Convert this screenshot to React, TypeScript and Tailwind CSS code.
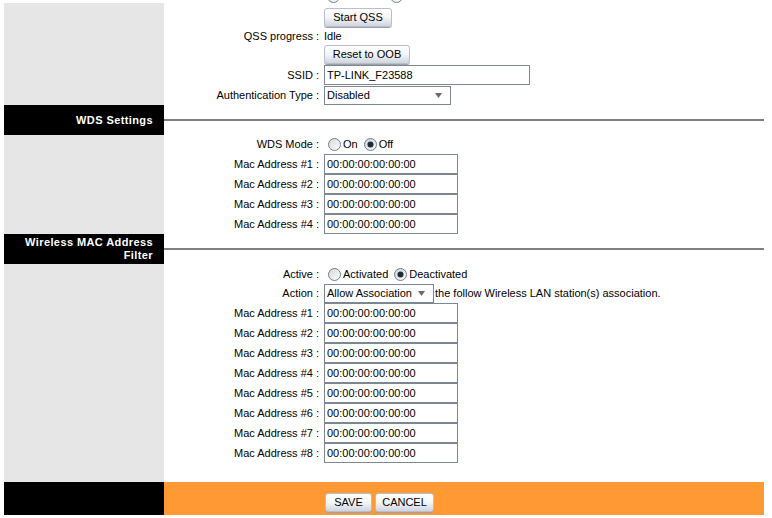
import type { ReactNode } from "react";

const FONT = "font-['Liberation_Sans',Arial,sans-serif]";

function Radio({ checked }: { checked?: boolean }) {
  return (
    <svg width="13" height="13" viewBox="0 0 13 13" className="shrink-0">
      <defs>
        <linearGradient id={checked ? "rg1" : "rg0"} x1="0" y1="0" x2="1" y2="1">
          <stop offset="0" stopColor={checked ? "#c9ced6" : "#d6d6d6"} />
          <stop offset="1" stopColor="#ffffff" />
        </linearGradient>
      </defs>
      <circle cx="6.5" cy="6.5" r="6" fill={`url(#${checked ? "rg1" : "rg0"})`} stroke="#6f7f8f" strokeWidth="1" />
      {checked && <circle cx="6.5" cy="6.5" r="3" fill="#1f2a36" />}
    </svg>
  );
}

function Btn({ children, w }: { children: ReactNode; w: string }) {
  return (
    <div
      className={`${w} h-[19px] flex items-center justify-center rounded-[3px] border border-[#b9bec8] bg-gradient-to-b from-white via-[#f4f5f7] to-[#cfd4df] text-[11px] text-black leading-none shadow-[0_1px_0_#9aa1ad]`}
    >
      {children}
    </div>
  );
}

function Box({ value, w }: { value: string; w: string }) {
  return (
    <div className={`${w} h-[20px] border border-[#7d8793] bg-white flex items-center pl-[2px] text-[11px] text-black leading-none`}>
      {value}
    </div>
  );
}

function Select({ value, w }: { value: string; w: string }) {
  return (
    <div className={`${w} h-[19px] border border-[#7d8793] bg-white flex items-center justify-between pl-[2px] pr-[8px] text-[11px] text-black leading-none`}>
      <span>{value}</span>
      <svg width="7" height="5" viewBox="0 0 7 5">
        <path d="M0 0 L7 0 L3.5 5 Z" fill="#6b6b6b" />
      </svg>
    </div>
  );
}

function Row({ h, label, children }: { h: string; label?: string; children?: ReactNode }) {
  return (
    <div className={`flex ${h}`}>
      <div className="w-[160px] shrink-0 bg-[#e6e6e6]" />
      <div className="w-[158px] shrink-0 flex items-center justify-end pr-[3px] text-[11px] text-black">
        {label}
      </div>
      <div className="flex items-center pl-[2px] text-[11px] text-black">{children}</div>
    </div>
  );
}

function Bar({ children }: { children: ReactNode }) {
  return (
    <div className="flex h-[30px]">
      <div className="w-[160px] shrink-0 bg-black flex flex-col justify-center items-end pr-[11px] text-[11px] font-bold tracking-[0.4px] text-white leading-[13px] text-right">
        {children}
      </div>
      <div className="flex-1 flex items-center">
        <div className="w-full h-[2px] bg-[#808080]" />
      </div>
    </div>
  );
}

const macs = ["#1", "#2", "#3", "#4", "#5", "#6", "#7", "#8"];

export default function App() {
  return (
    <div className={`w-[772px] h-[518px] overflow-hidden bg-white ${FONT}`}>
      <div className="w-[764px] pl-[4px] -mt-[14px]">
        <div className="flex h-[20px]">
          <div className="w-[160px] shrink-0 mt-[17px] bg-[#e6e6e6]" />
          <div className="w-[158px] shrink-0" />
          <div className="flex items-center gap-[50px] pl-[5px]">
            <Radio />
            <Radio />
          </div>
        </div>
        <Row h="h-[22px]">
          <Btn w="w-[68px]">Start QSS</Btn>
        </Row>
        <Row h="h-[16px]" label="QSS progress :">
          <span>Idle</span>
        </Row>
        <Row h="h-[21px]">
          <Btn w="w-[86px]">Reset to OOB</Btn>
        </Row>
        <Row h="h-[20px]" label="SSID :">
          <Box w="w-[206px]" value="TP-LINK_F23588" />
        </Row>
        <Row h="h-[20px]" label="Authentication Type :">
          <Select w="w-[127px]" value="Disabled" />
        </Row>
        <Bar>WDS Settings</Bar>
        <Row h="h-[19px]" label="WDS Mode :">
          <div className="flex items-center pl-[4px]">
            <Radio />
            <span className="ml-[2px] mr-[6px]">On</span>
            <Radio checked />
            <span className="ml-[2px]">Off</span>
          </div>
        </Row>
        {macs.slice(0, 4).map((m) => (
          <Row key={m} h="h-[20px]" label={`Mac Address ${m} :`}>
            <Box w="w-[134px]" value="00:00:00:00:00:00" />
          </Row>
        ))}
        <Bar>
          <span>Wireless MAC Address</span>
          <span>Filter</span>
        </Bar>
        <Row h="h-[20px]" label="Active :">
          <div className="flex items-center pl-[4px]">
            <Radio />
            <span className="ml-[2px] mr-[6px]">Activated</span>
            <Radio checked />
            <span className="ml-[2px]">Deactivated</span>
          </div>
        </Row>
        <Row h="h-[19px]" label="Action :">
          <Select w="w-[110px]" value="Allow Association" />
          <span className="ml-[1px]">the follow Wireless LAN station(s) association.</span>
        </Row>
        {macs.map((m) => (
          <Row key={m + "f"} h="h-[20px]" label={`Mac Address ${m} :`}>
            <Box w="w-[134px]" value="00:00:00:00:00:00" />
          </Row>
        ))}
        <Row h="h-[19px]" />
        <div className="flex h-[33px]">
          <div className="w-[160px] shrink-0 bg-black" />
          <div className="flex-1 bg-[#ff9933] flex items-end pb-[3px] pl-[161px] gap-[3px]">
            <Btn w="w-[47px]">SAVE</Btn>
            <Btn w="w-[59px]">CANCEL</Btn>
          </div>
        </div>
      </div>
    </div>
  );
}
